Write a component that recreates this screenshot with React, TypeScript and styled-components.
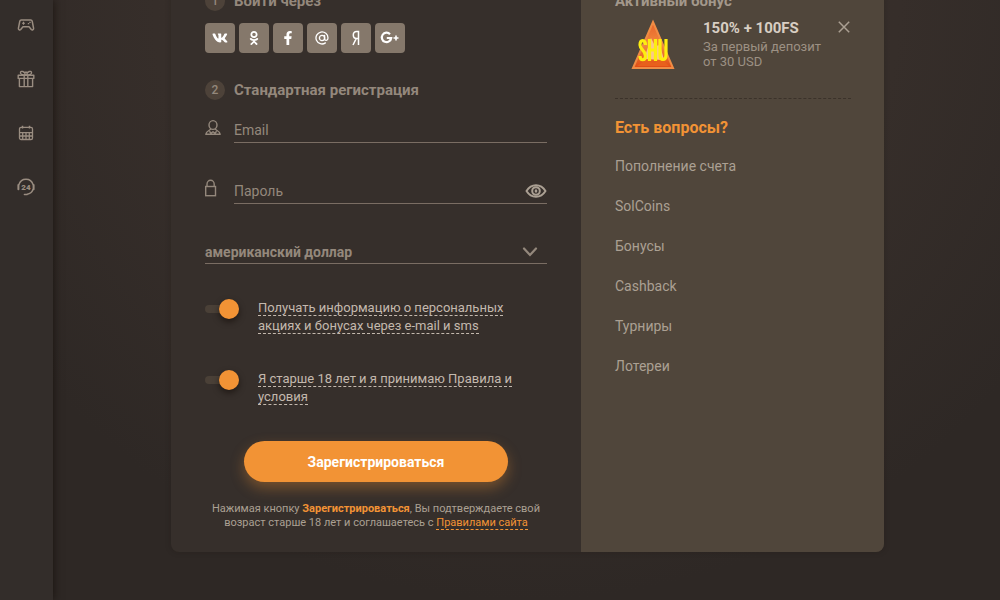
import React, { useState } from "react";
import styled, { createGlobalStyle } from "styled-components";
import { FaVk, FaOdnoklassniki, FaFacebookF } from "react-icons/fa";

const color = {
  sidebar: "#332d2a",
  panel: "#362f2b",
  aside: "#50463b",
  muted: "#94887c",
  line: "#7a6d63",
  text: "#c4b9ae",
  link: "#aba093",
  accent: "#f29335",
};

const GlobalStyle = createGlobalStyle`
  *, *::before, *::after { box-sizing: border-box; }
  body {
    margin: 0;
    background: #2e2825;
    color: ${color.text};
    font-family: Roboto, "Liberation Sans", sans-serif;
    font-size: 14px;
  }
  button, input, select { font: inherit; color: inherit; }
  h2, h3, p, ul { margin: 0; padding: 0; }
`;

const Shell = styled.div`
  display: flex;
  height: 100vh;
  overflow: hidden;
`;

const Sidebar = styled.nav`
  flex: 0 0 53px;
  display: flex;
  flex-direction: column;
  align-items: center;
  gap: 34px;
  padding: 15px 1px 0 0;
  background: ${color.sidebar};
  box-shadow: 1px 0 8px rgba(18, 12, 8, 0.65);
  z-index: 1;
`;

const SideLink = styled.a`
  display: grid;
  place-items: center;
  width: 20px;
  height: 20px;
  color: #9a8d81;
`;

const Main = styled.main`
  flex: 1;
  min-width: 0;
  display: flex;
  flex-direction: column;
  align-items: center;
  padding-left: 2px;
  background: radial-gradient(ellipse 620px 600px at 50% 0, #3b312b 0%, #362e2a 60%, #2e2825 100%);
`;

const Card = styled.div`
  display: grid;
  grid-template-columns: 410fr 303fr;
  width: calc(100% - 32px);
  max-width: 713px;
  /* the card is scrolled so that its first rows pass under the top edge */
  margin-top: -40px;
  border-radius: 8px;
  overflow: hidden;
  background: ${color.panel};
  box-shadow: 0 0 6px rgba(20, 14, 10, 0.18);
`;

const Form = styled.form`
  padding: 31px 34px 22px;
`;

const StepTitle = styled.h2`
  display: flex;
  align-items: center;
  gap: 9px;
  height: 20px;
  color: ${color.muted};
  font-size: 15px;
  line-height: 20px;
  font-weight: 700;
`;

const StepNumber = styled.span`
  width: 20px;
  height: 20px;
  border-radius: 50%;
  background: #4d4239;
  text-align: center;
  font-size: 12px;
  font-weight: 500;
`;

const Socials = styled.div`
  display: flex;
  gap: 4px;
  margin: 12px 0 27px;
`;

const SocialButton = styled.button`
  display: grid;
  place-items: center;
  width: 30px;
  height: 30px;
  padding: 0;
  border: 0;
  border-radius: 4px;
  background: #85786b;
  color: #fff;
  cursor: pointer;
`;

const Field = styled.label`
  display: grid;
  grid-template-columns: 16px 1fr;
  column-gap: 13px;
  margin-bottom: 36px;
  color: ${color.muted};
`;

const FirstField = styled(Field)`
  margin-top: 18px;
`;

const FieldBox = styled.span`
  display: flex;
  align-items: center;
  min-width: 0;
  height: 25px;
  border-bottom: 1px solid ${color.line};
`;

const TextInput = styled.input`
  flex: 1;
  min-width: 0;
  height: 24px;
  padding: 0;
  border: 0;
  outline: 0;
  background: none;
  &::placeholder { color: ${color.muted}; opacity: 1; }
`;

const IconButton = styled.button`
  display: grid;
  place-items: center;
  padding: 0;
  border: 0;
  background: none;
  color: ${color.link};
  cursor: pointer;
`;

const SelectBox = styled.div`
  display: grid;
  align-items: center;
  height: 24px;
  border-bottom: 1px solid ${color.line};
  color: ${color.muted};
  & > * { grid-area: 1 / 1; }
  & > svg { justify-self: end; margin-right: 9px; pointer-events: none; }
`;

const Select = styled.select`
  appearance: none;
  width: 100%;
  height: 23px;
  padding: 0;
  border: 0;
  outline: 0;
  background: none;
  font-weight: 700;
`;

const ToggleRow = styled.label`
  display: grid;
  grid-template-columns: 34px 1fr;
  column-gap: 19px;
  margin-top: 35px;
  cursor: pointer;
`;

const Toggle = styled.input`
  appearance: none;
  display: flex;
  align-items: center;
  width: 34px;
  height: 20px;
  margin: 0;
  cursor: pointer;
  &::before {
    content: "";
    width: 34px;
    height: 8px;
    margin-right: -34px;
    border-radius: 4px;
    background: #4a4037;
  }
  &::after {
    content: "";
    width: 20px;
    height: 20px;
    border-radius: 50%;
    background: ${color.muted};
    box-shadow: 0 3px 6px rgba(15, 8, 4, 0.55);
  }
  &:checked::after { margin-left: auto; background: ${color.accent}; }
`;

const ToggleText = styled.span`
  font-size: 13px;
  line-height: 18px;
`;

const Dashed = styled.span`
  border-bottom: 1px dashed currentColor;
`;

const Submit = styled.button`
  display: block;
  width: 100%;
  max-width: 264px;
  height: 41px;
  margin: 35px auto 20px;
  border: 0;
  border-radius: 21px;
  background: ${color.accent};
  box-shadow: 0 6px 14px rgba(242, 147, 53, 0.35);
  color: #fff;
  font-weight: 700;
  cursor: pointer;
`;

const FinePrint = styled.p`
  color: ${color.link};
  font-size: 11px;
  line-height: 14px;
  text-align: center;
`;

const Accent = styled.strong`
  color: ${color.accent};
`;

const RulesLink = styled.a`
  border-bottom: 1px dashed ${color.accent};
  color: ${color.accent};
  text-decoration: none;
`;

const Aside = styled.aside`
  padding: 31px 33px 22px 34px;
  background: ${color.aside};
`;

const AsideTitle = styled.h2`
  color: #a3988b;
  font-size: 15px;
  line-height: 20px;
`;

const Bonus = styled.section`
  display: grid;
  grid-template-columns: 75px 1fr 14px;
  column-gap: 13px;
  align-items: start;
  margin-top: 8px;
  padding-bottom: 28px;
  border-bottom: 1px dashed #3b322a;
  & > svg { justify-self: center; }
`;

const BonusTitle = styled.h3`
  color: #d8cec3;
  font-size: 15px;
  line-height: 18px;
`;

const BonusText = styled.p`
  color: #9d9184;
  font-size: 13px;
  line-height: 15px;
  padding-top: 2px;
`;

const CloseButton = styled(IconButton)`
  height: 16px;
`;

const HelpTitle = styled.h2`
  margin-top: 19px;
  color: ${color.accent};
  font-size: 16px;
  line-height: 20px;
`;

const HelpList = styled.ul`
  display: grid;
  gap: 20px;
  margin-top: 18px;
  list-style: none;
`;

const HelpLink = styled.a`
  color: ${color.link};
  line-height: 20px;
  text-decoration: none;
  display: block;
`;

const GamepadIcon = () => (
  <svg width="18" height="14" viewBox="0 0 18 14" fill="none" stroke="currentColor" strokeWidth="1.5" strokeLinejoin="round">
    <path d="M4.2 2h9.600c.8 0 1.200.4 1.400 1.200l1.400 7.200c.2 1.400-1.400 2-2.300 1L12 8.700H6l-2.300 2.700c-.9 1-2.500.4-2.300-1l1.400-7.200C3 2.400 3.400 2 4.200 2z" />
    <path d="M5 5.200h3M6.500 3.700v3" strokeWidth="1.100" />
    <path d="M10.800 5.700h1.400M12.300 4.400h1.400" strokeWidth="1.300" />
  </svg>
);

const GiftIcon = () => (
  <svg width="18" height="18" viewBox="0 0 18 18" fill="none" stroke="currentColor" strokeWidth="1.4" strokeLinejoin="round">
    <path d="M1.200 5.200h15.600v3.200H1.200zM2.400 8.400h13.200v8.200H2.400zM7.200 5.200v11.400M10.800 5.200v11.400" />
    <path d="M8.500 5C5 5 3 4 3.500 2.300S7.800 1 8.500 5zM9.500 5C13 5 15 4 14.500 2.300S10.200 1 9.500 5zM7.600 2.200h2.800" />
  </svg>
);

const CalendarIcon = () => (
  <svg width="16" height="16" viewBox="0 0 16 16" fill="none" stroke="currentColor" strokeWidth="1.300">
    <rect x="1.500" y="2.300" width="13" height="12.200" rx="1.600" />
    <path d="M4.500 .8v2.600M11.500 .8v2.600" strokeWidth="1.500" />
    <path d="M1.500 7.600h13M1.500 11h13M4.700 7.600v7M8 7.600v7M11.300 7.600v7" />
  </svg>
);

const SupportIcon = () => (
  <svg width="18" height="18" viewBox="0 0 18 18" fill="none" stroke="currentColor" strokeWidth="1.500" strokeLinecap="round">
    <path d="M2 6.400a7.300 7.300 0 0 1 14 0M16 11.600c-1 2.700-3 4.300-5.800 4.700M7.400 16.400h2.800" />
    <path d="M1.400 7v4.200M16.600 7v4.200" strokeWidth="2" />
    <text x="9" y="11.800" textAnchor="middle" fill="currentColor" stroke="none" fontSize="8" fontWeight="900">24</text>
  </svg>
);

const UserIcon = () => (
  <svg width="16" height="18" viewBox="0 0 16 18" fill="none" stroke="currentColor" strokeWidth="1.400" strokeLinejoin="round">
    <ellipse cx="8" cy="7" rx="4" ry="4.400" />
    <path d="M5.700 10.900C5.200 12.600 1.200 12.800.8 16.300h14.400C14.800 12.800 10.800 12.600 10.300 10.900M4.400 13.300l1.600 2L8 13.700l2 1.600 1.600-2" />
  </svg>
);

const LockIcon = () => (
  <svg width="12" height="18" viewBox="0 0 12 18" fill="none" stroke="currentColor" strokeWidth="1.400">
    <rect x=".7" y="7.500" width="9.800" height="9.200" />
    <path d="M2 7.500V5.200a3.600 3.900 0 0 1 7.200 0v2.300" />
  </svg>
);

const EyeIcon = () => (
  <svg width="22" height="14" viewBox="0 0 22 14" fill="none" stroke="currentColor" strokeWidth="2" strokeLinejoin="round">
    <path d="M1.500 7C4 3 7 1.300 11 1.300S18 3 20.500 7C18 11 15 12.700 11 12.700S4 11 1.500 7z" />
    <circle cx="11" cy="7" r="3.800" />
    <ellipse cx="11" cy="7" rx="1.300" ry="1.800" fill="currentColor" stroke="none" />
  </svg>
);

const ChevronIcon = () => (
  <svg width="16" height="10" viewBox="0 0 16 10" fill="none" stroke="currentColor" strokeWidth="2.200" strokeLinecap="round">
    <path d="M2 1.500L8 8l6-6.500" />
  </svg>
);

const CloseIcon = () => (
  <svg width="12" height="12" viewBox="0 0 12 12" stroke="currentColor" strokeWidth="1.500">
    <path d="M.8.8l10.400 10.400M11.200.8L.8 11.200" />
  </svg>
);

const AtIcon = () => (
  <svg width="14" height="14" viewBox="0 0 14 14" fill="none" stroke="currentColor" strokeWidth="1.300" strokeLinecap="round">
    <circle cx="7" cy="7" r="2.600" />
    <path d="M9.600 4.400v3.400c0 2.300 3.400 2 3.400-.8a6 6 0 1 0-2.600 4.900" />
  </svg>
);

const YandexIcon = () => (
  <svg width="10" height="16" viewBox="0 0 10 16" fill="none" stroke="currentColor" strokeWidth="1.500">
    <path d="M7.500 15V1.500H5.600C3.400 1.500 2.300 3 2.300 5s1.100 3.500 3.300 3.500h1.900M5.200 8.600L2 15" />
  </svg>
);

const GooglePlusIcon = () => (
  <svg width="20" height="14" viewBox="0 0 20 14" fill="none" stroke="currentColor">
    <path d="M10 3.200A4.700 4.700 0 1 0 11.200 7H6.800" strokeWidth="2.200" />
    <path d="M13.500 7h5M16 4.500v5" strokeWidth="1.600" />
  </svg>
);

const BonusLogo = () => (
  <svg width="44" height="51" viewBox="0 0 44 51" role="img" aria-label="SHU">
    <defs>
      <linearGradient id="flame" x1="0" y1="0" x2="0" y2="1">
        <stop offset="0" stopColor="#e8622a" />
        <stop offset=".5" stopColor="#f08a3c" />
        <stop offset="1" stopColor="#e04a14" />
      </linearGradient>
    </defs>
    <path d="M22 3L42 49H2z" fill="url(#flame)" stroke="#f08c44" strokeWidth="2" />
    <path d="M13 40l7-21 4 8 5-1 4 15z" fill="#fbc88a" />
    <path d="M6 47l9-6 8 3 8-4 7 7z" fill="#e8601c" />
    <g fill="none" stroke="#fdee10" strokeWidth="3.200">
      <path d="M14.500 26c0-6-5.500-5.500-5.500 0 0 5 5.500 5 5.500 11 0 5-5.500 5-5.500 0" />
      <path d="M18.500 20v22M24.500 20v22M18.500 31h6" />
      <path d="M29 20v16c0 6 6 6 6 0V20" />
    </g>
  </svg>
);

const sideLinks = [
  { name: "Игры", Icon: GamepadIcon },
  { name: "Бонусы", Icon: GiftIcon },
  { name: "Календарь", Icon: CalendarIcon },
  { name: "Поддержка", Icon: SupportIcon },
];

const socials = [
  { name: "VK", icon: <FaVk size={16} /> },
  { name: "Одноклассники", icon: <FaOdnoklassniki size={14} /> },
  { name: "Facebook", icon: <FaFacebookF size={14} /> },
  { name: "Mail.ru", icon: <AtIcon /> },
  { name: "Яндекс", icon: <YandexIcon /> },
  { name: "Google+", icon: <GooglePlusIcon /> },
];

const topics = ["Пополнение счета", "SolCoins", "Бонусы", "Cashback", "Турниры", "Лотереи"];

export default function App() {
  const [visible, setVisible] = useState(false);

  return (
    <Shell>
      <GlobalStyle />
      <Sidebar>
        {sideLinks.map(({ name, Icon }) => (
          <SideLink key={name} href="#" aria-label={name}>
            <Icon />
          </SideLink>
        ))}
      </Sidebar>
      <Main>
        <Card>
          <Form onSubmit={(e) => e.preventDefault()}>
            <StepTitle>
              <StepNumber>1</StepNumber>Войти через
            </StepTitle>
            <Socials>
              {socials.map(({ name, icon }) => (
                <SocialButton key={name} type="button" aria-label={name}>
                  {icon}
                </SocialButton>
              ))}
            </Socials>
            <StepTitle>
              <StepNumber>2</StepNumber>Стандартная регистрация
            </StepTitle>
            <FirstField>
              <UserIcon />
              <FieldBox>
                <TextInput type="email" placeholder="Email" aria-label="Email" />
              </FieldBox>
            </FirstField>
            <Field>
              <LockIcon />
              <FieldBox>
                <TextInput type={visible ? "text" : "password"} placeholder="Пароль" aria-label="Пароль" />
                <IconButton type="button" aria-label="Показать пароль" onClick={() => setVisible(!visible)}>
                  <EyeIcon />
                </IconButton>
              </FieldBox>
            </Field>
            <SelectBox>
              <Select aria-label="Валюта">
                <option>американский доллар</option>
              </Select>
              <ChevronIcon />
            </SelectBox>
            <ToggleRow>
              <Toggle type="checkbox" defaultChecked />
              <ToggleText>
                <Dashed>Получать информацию о персональных акциях и бонусах через e-mail и sms</Dashed>
              </ToggleText>
            </ToggleRow>
            <ToggleRow>
              <Toggle type="checkbox" defaultChecked />
              <ToggleText>
                <Dashed>Я старше 18 лет и я принимаю Правила и условия</Dashed>
              </ToggleText>
            </ToggleRow>
            <Submit type="submit">Зарегистрироваться</Submit>
            <FinePrint>
              Нажимая кнопку <Accent>Зарегистрироваться</Accent>, Вы подтверждаете свой возраст старше 18 лет и
              соглашаетесь с <RulesLink href="#">Правилами сайта</RulesLink>
            </FinePrint>
          </Form>
          <Aside>
            <AsideTitle>Активный бонус</AsideTitle>
            <Bonus>
              <BonusLogo />
              <div>
                <BonusTitle>150% + 100FS</BonusTitle>
                <BonusText>
                  За первый депозит
                  <br />
                  от 30 USD
                </BonusText>
              </div>
              <CloseButton type="button" aria-label="Закрыть">
                <CloseIcon />
              </CloseButton>
            </Bonus>
            <HelpTitle>Есть вопросы?</HelpTitle>
            <HelpList>
              {topics.map((topic) => (
                <li key={topic}>
                  <HelpLink href="#">{topic}</HelpLink>
                </li>
              ))}
            </HelpList>
          </Aside>
        </Card>
      </Main>
    </Shell>
  );
}
